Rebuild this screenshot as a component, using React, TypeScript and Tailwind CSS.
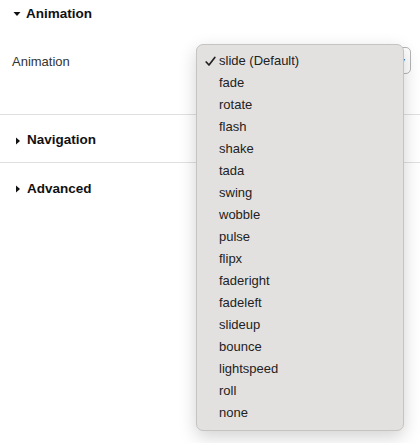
const options = [
  "slide (Default)",
  "fade",
  "rotate",
  "flash",
  "shake",
  "tada",
  "swing",
  "wobble",
  "pulse",
  "flipx",
  "faderight",
  "fadeleft",
  "slideup",
  "bounce",
  "lightspeed",
  "roll",
  "none",
];

function Caret({ open }: { open?: boolean }) {
  return (
    <svg width="8" height="8" viewBox="0 0 8 8" className="shrink-0">
      {open ? <path d="M0.5 2 L7.5 2 L4 6 Z" fill="#111" /> : <path d="M2 0.5 L6 4 L2 7.5 Z" fill="#111" />}
    </svg>
  );
}

function Check() {
  return (
    <svg width="11" height="11" viewBox="0 0 11 11" className="shrink-0">
      <path d="M1.2 6 L4 9 L9.8 1.5" fill="none" stroke="#222" strokeWidth="1.7" strokeLinecap="round" strokeLinejoin="round" />
    </svg>
  );
}

function Section({ title, last }: { title: string; last?: boolean }) {
  return (
    <div className={last ? "flex h-[48px] items-center gap-[5px] pl-[14px] pt-[4px]" : "flex h-[48px] items-center gap-[5px] border-b border-[#e0e0e0] pl-[14px] pt-[4px]"}>
      <Caret />
      <span className="text-[13.5px] font-bold text-[#111]">{title}</span>
    </div>
  );
}

export default function App() {
  return (
    <div className="h-[443px] w-[420px] overflow-hidden bg-white font-['Liberation_Sans',Arial,sans-serif]">
      <div className="border-b border-[#e0e0e0]">
        <div className="flex h-[28px] items-center gap-[5px] pl-[13px]">
          <Caret open />
          <span className="text-[13.5px] font-bold text-[#111]">Animation</span>
        </div>
        <div className="flex h-[86px] items-start justify-between pl-[12px] pr-[9px] pt-[19px]">
          <span className="mt-[5px] text-[13px] text-[#333]">Animation</span>
          <div className="relative">
            <div className="flex h-[27px] w-[215px] items-center justify-end rounded-[5px] border border-[#b5b5b5] pr-[5px] text-[8px] text-[#555]">
              ▾
            </div>
            <div className="absolute left-0 top-[-3px] z-10 w-[208px] rounded-[7px] border border-[#c6c4c2] bg-[#e3e1df] pb-[6px] pt-[5px] shadow-[0_6px_18px_rgba(0,0,0,0.18)]">
              {options.map((o, i) => (
                <div key={o} className="flex h-[22px] items-center pl-[8px] text-[13px] text-[#222]">
                  <span className="flex w-[14px] items-center">{i === 0 && <Check />}</span>
                  <span>{o}</span>
                </div>
              ))}
            </div>
          </div>
        </div>
      </div>
      <Section title="Navigation" />
      <Section title="Advanced" last />
    </div>
  );
}
